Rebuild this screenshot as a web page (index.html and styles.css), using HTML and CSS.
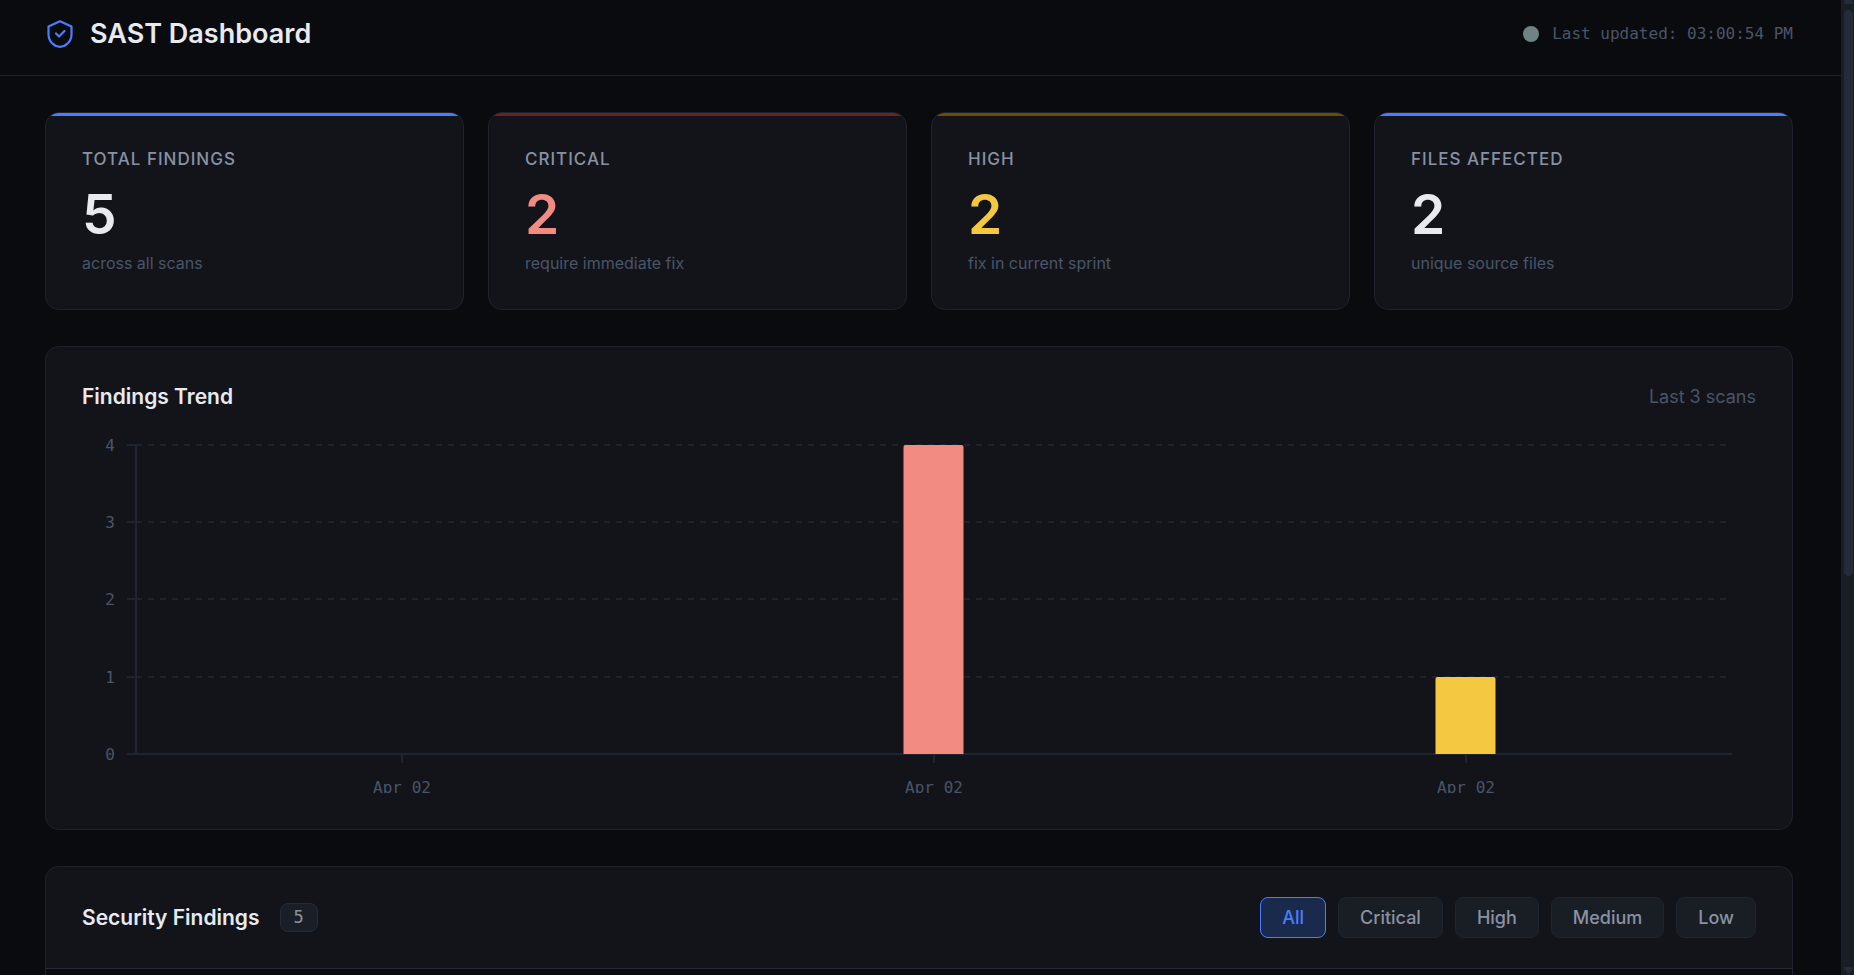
FILE: index.html
```html
<!DOCTYPE html>
<html lang="en">
<head>
<meta charset="utf-8">
<title>SAST Dashboard</title>
<link rel="stylesheet" href="styles.css">
</head>
<body>
<div class="page">
  <header class="topbar">
    <div class="brand">
      <svg class="logo" viewBox="0 0 30 30" fill="none" stroke="#4a7dff" stroke-width="2.200" stroke-linecap="round" stroke-linejoin="round" aria-hidden="true">
        <path d="M15 2.200 26.500 7.500v8C26.500 22.500 20.500 27.800 15 27.800S3.500 22.500 3.500 15.500v-8z"/>
        <path d="m11 14.500 3 3 5.500-5.500"/>
      </svg>
      <h1 class="title">SAST Dashboard</h1>
    </div>
    <div class="status"><span class="dot"></span><span>Last updated: 03:00:54 PM</span></div>
  </header>
  <main class="main">
    <section class="stats">
      <article class="card stat blue"><h2 class="label">Total Findings</h2><p class="value">5</p><p class="note">across all scans</p></article>
      <article class="card stat red"><h2 class="label">Critical</h2><p class="value">2</p><p class="note">require immediate fix</p></article>
      <article class="card stat amber"><h2 class="label">High</h2><p class="value">2</p><p class="note">fix in current sprint</p></article>
      <article class="card stat blue"><h2 class="label">Files Affected</h2><p class="value">2</p><p class="note">unique source files</p></article>
    </section>
    <section class="card trend">
      <div class="trend-head"><h2 class="heading">Findings Trend</h2><span class="range">Last 3 scans</span></div>
      <svg class="chart" viewBox="0 0 1674 360" role="img" aria-label="Findings per scan">
        <g class="grid">
          <path d="M54 12H1650"/><path d="M54 89H1650"/><path d="M54 166H1650"/><path d="M54 244H1650"/><path d="M54 321H1650"/>
        </g>
        <path class="axis" d="M54 12V321M45 321H1650M45 12h9M45 89h9M45 166h9M45 244h9M320 321v9M852 321v9M1384 321v9"/>
        <path fill="#f28b82" d="M821.500 321V14q0-2 2-2h56q2 0 2 2v307z"/>
        <path fill="#f5c842" d="M1353.500 321V246q0-2 2-2h56q2 0 2 2v75z"/>
        <g class="tick" text-anchor="end">
          <text x="33" y="18">4</text><text x="33" y="95">3</text><text x="33" y="172">2</text><text x="33" y="250">1</text><text x="33" y="327">0</text>
        </g>
        <g class="tick" text-anchor="middle">
          <text x="320" y="360">Apr 02</text><text x="852" y="360">Apr 02</text><text x="1384" y="360">Apr 02</text>
        </g>
      </svg>
    </section>
    <section class="card findings">
      <div class="findings-head">
        <div class="findings-title"><h2 class="heading">Security Findings</h2><span class="count">5</span></div>
        <div class="filters">
          <button class="filter active" type="button">All</button>
          <button class="filter" type="button">Critical</button>
          <button class="filter" type="button">High</button>
          <button class="filter" type="button">Medium</button>
          <button class="filter" type="button">Low</button>
        </div>
      </div>
      <div class="findings-body"></div>
    </section>
  </main>
</div>
<div class="scrollbar" aria-hidden="true">
  <svg class="arrow" viewBox="0 0 9 8"><path fill="#252b38" d="M0 4V2q0-2 2-2h5q2 0 2 2v2z"/></svg>
  <div class="thumb"></div>
  <svg class="arrow" viewBox="0 0 9 8"><path fill="#252b38" d="M1 0h7q1 0 1 1v1L5 7H4L0 2V1q0-1 1-1z"/></svg>
</div>
</body>
</html>
```
FILE: styles.css
```css
* { box-sizing: border-box; }
body {
  margin: 0;
  height: 100vh;
  overflow: hidden;
  display: grid;
  grid-template-columns: 1fr 13px;
  background: #0a0b0f;
  color: #e8eaf0;
  font-family: Inter, sans-serif;
}
h1, h2, p { margin: 0; }
.page { min-width: 0; overflow: hidden; }
.topbar {
  display: flex;
  align-items: center;
  justify-content: space-between;
  padding: 16px 48px 24px 45px;
  border-bottom: 1px solid #1e222c;
}
.brand { display: flex; align-items: center; gap: 15px; }
.logo { width: 30px; height: 30px; }
.title { font-size: 27px; line-height: 35px; font-weight: 600; }
.status {
  display: flex;
  align-items: center;
  gap: 13px;
  color: #4a5568;
  font: 16px/24px "DejaVu Sans Mono", monospace;
}
.dot { width: 16px; height: 16px; border-radius: 50%; background: #6f8385; }
.main { display: grid; gap: 36px; padding: 36px 48px 0 45px; }
.stats { display: grid; grid-template-columns: repeat(4, 1fr); gap: 24px; }
.card {
  background: #12141a;
  border: 1px solid #1e222c;
  border-radius: 14px;
  overflow: hidden;
}
.stat { position: relative; padding: 36px; }
.stat::before {
  content: "";
  position: absolute;
  inset: 0 0 auto;
  height: 3px;
  background: var(--accent);
}
.blue { --accent: #4a7dff; }
.red { --accent: #6f2020; }
.amber { --accent: #6b4c00; }
.label {
  color: #8892a4;
  font-size: 17px;
  line-height: 20px;
  font-weight: 500;
  letter-spacing: 1px;
  text-transform: uppercase;
}
.value { margin-top: 18px; font-size: 55px; line-height: 55px; font-weight: 600; }
.red .value { color: #f28b82; }
.amber .value { color: #f5c842; }
.note { margin-top: 11px; color: #4a5568; font-size: 16px; line-height: 20px; }
.trend { padding: 36px; }
.trend-head { display: flex; align-items: center; justify-content: space-between; height: 50px; padding-bottom: 23px; }
.heading { font-size: 21px; line-height: 27px; font-weight: 600; }
.range { color: #4a5568; font-size: 18px; }
.chart { display: block; width: 100%; overflow: hidden; }
.grid path { stroke: #1e222c; stroke-width: 2; stroke-dasharray: 6 6; }
.axis { fill: none; stroke: #1e2430; stroke-width: 2; }
.tick { fill: #4a5568; font: 16px "DejaVu Sans Mono", monospace; }
.findings { border-radius: 14px 14px 0 0; border-bottom: 0; }
.findings-head {
  display: flex;
  align-items: center;
  justify-content: space-between;
  padding: 30px 36px;
  border-bottom: 1px solid #252b38;
}
.findings-title { display: flex; align-items: center; gap: 20px; }
.count {
  padding: 0 13px;
  border: 1px solid #252b38;
  border-radius: 8px;
  background: #1a1e26;
  color: #8892a4;
  font: 17px/27px "DejaVu Sans Mono", monospace;
}
.filters { display: flex; gap: 12px; }
.filter {
  height: 41px;
  padding: 0 21px;
  border: 1px solid #1e2430;
  border-radius: 8px;
  background: #191d24;
  color: #8892a4;
  font: 500 18px/24px Inter, sans-serif;
}
.active { border-color: #4a7dff; background: #1a2a4d; color: #4a7dff; }
.findings-body { height: 300px; background: #0a0b0f; }
.scrollbar {
  display: flex;
  flex-direction: column;
  align-items: center;
  padding-left: 2px;
  background: #191d24;
}
.arrow { width: 9px; height: 8px; }
.arrow:last-child { margin-top: auto; }
.thumb { width: 9px; height: 58%; margin-top: 2px; border-radius: 5px; background: #252b38; }
```
